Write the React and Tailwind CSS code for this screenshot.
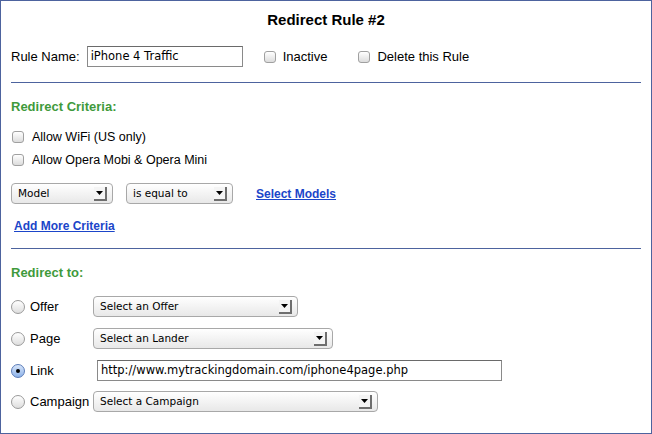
import React from 'react';

const sans = { fontFamily: '"Liberation Sans", Arial, sans-serif' };
const lucida = { fontFamily: '"DejaVu Sans", sans-serif' };

function Checkbox() {
  return (
    <span className="inline-block h-[12px] w-[12px] shrink-0 rounded-[3px] border border-[#a0a0a0] bg-gradient-to-b from-white to-[#dcdcdc]" />
  );
}

function Radio({ checked }) {
  if (checked) {
    return (
      <span className="flex h-[14px] w-[14px] shrink-0 items-center justify-center rounded-full border border-[#5a7bb8] bg-gradient-to-b from-[#d8e6fa] to-[#8db2e8]">
        <span className="h-[4px] w-[4px] rounded-full bg-black" />
      </span>
    );
  }
  return (
    <span className="inline-block h-[14px] w-[14px] shrink-0 rounded-full border border-[#9a9a9a] bg-gradient-to-b from-white to-[#dedede]" />
  );
}

// aqua-ish select box with the little arrow square
function Select({ label, width }) {
  return (
    <div
      className="relative flex h-[21px] shrink-0 items-center rounded-[4px] border border-[#a8a8a8] bg-gradient-to-b from-white to-[#e8e8e8] pl-[6px] text-[10.5px] text-black"
      style={{ ...lucida, width }}
    >
      {label}
      <span className="absolute right-[5px] top-[3px] flex h-[14px] w-[13px] items-center justify-center border-b-2 border-r-2 border-b-[#6e6e6e] border-r-[#6e6e6e] bg-[#f4f4f4]">
        <svg width="7" height="4" viewBox="0 0 7 4">
          <path d="M0 0H7L3.5 4Z" fill="#000" />
        </svg>
      </span>
    </div>
  );
}

function TextInput({ value, width }) {
  return (
    <div
      className="flex h-[21px] shrink-0 items-center border border-[#8a8a8a] border-t-[#6a6a6a] bg-white pl-[3px] text-[11.5px] text-black"
      style={{ ...lucida, width }}
    >
      {value}
    </div>
  );
}

function RadioRow({ label, checked, children, gap }) {
  return (
    <div className="flex h-[21px] items-center">
      <div className="flex w-[82px] items-center gap-[5px]">
        <Radio checked={checked} />
        <span className="text-[13px] leading-none text-black">{label}</span>
      </div>
      <div style={{ marginLeft: gap }}>{children}</div>
    </div>
  );
}

export default function App() {
  return (
    <div className="h-[434px] w-[652px] overflow-hidden bg-white" style={sans}>
      <div className="h-[434px] w-[652px] border border-[#4d639e] px-[10px]">
        {/* Titulo */}
        <div className="flex h-[39px] items-center justify-center text-[15px] font-bold text-black">
          Redirect Rule #2
        </div>

        {/* Nombre de la regla */}
        <div className="mt-[6px] flex h-[21px] items-center text-[13px] text-black">
          <span>Rule Name:</span>
          <div className="ml-[7px]">
            <TextInput value="iPhone 4 Traffic" width={156} />
          </div>
          <div className="ml-[21px] flex items-center gap-[7px]">
            <Checkbox />
            <span>Inactive</span>
          </div>
          <div className="ml-[31px] flex items-center gap-[7px]">
            <Checkbox />
            <span>Delete this Rule</span>
          </div>
        </div>

        <div className="mt-[15px] h-px bg-[#4d639e]" />

        {/* Criterios */}
        <div className="mt-[16px] h-[16px] text-[13px] font-bold leading-[16px] text-[#3f9a3c]">Redirect Criteria:</div>

        <div className="mt-[14px] flex h-[16px] items-center gap-[8px] pl-px text-[12.5px] text-black">
          <Checkbox />
          <span>Allow WiFi (US only)</span>
        </div>
        <div className="mt-[7px] flex h-[16px] items-center gap-[8px] pl-px text-[12.5px] text-black">
          <Checkbox />
          <span>Allow Opera Mobi &amp; Opera Mini</span>
        </div>

        <div className="mt-[15px] flex h-[21px] items-center">
          <Select label="Model" width={102} />
          <div className="ml-[13px]">
            <Select label="is equal to" width={107} />
          </div>
          <a className="ml-[23px] text-[12px] font-bold text-[#1b45c9] underline">Select Models</a>
        </div>

        <div className="mt-[14px] h-[16px] pl-[3px] text-[12px] font-bold leading-[16px]">
          <a className="text-[#1b45c9] underline">Add More Criteria</a>
        </div>

        <div className="mt-[14px] h-px bg-[#4d639e]" />

        {/* Destino */}
        <div className="mt-[16px] h-[16px] text-[13px] font-bold leading-[16px] text-[#3f9a3c]">Redirect to:</div>

        <div className="mt-[15px]">
          <RadioRow label="Offer" gap={0}>
            <Select label="Select an Offer" width={205} />
          </RadioRow>
        </div>
        <div className="mt-[11px]">
          <RadioRow label="Page" gap={0}>
            <Select label="Select an Lander" width={240} />
          </RadioRow>
        </div>
        <div className="mt-[11px]">
          <RadioRow label="Link" checked gap={4}>
            <TextInput value="http://www.mytrackingdomain.com/iphone4page.php" width={405} />
          </RadioRow>
        </div>
        <div className="mt-[10px]">
          <RadioRow label="Campaign" gap={0}>
            <Select label="Select a Campaign" width={285} />
          </RadioRow>
        </div>
      </div>
    </div>
  );
}
